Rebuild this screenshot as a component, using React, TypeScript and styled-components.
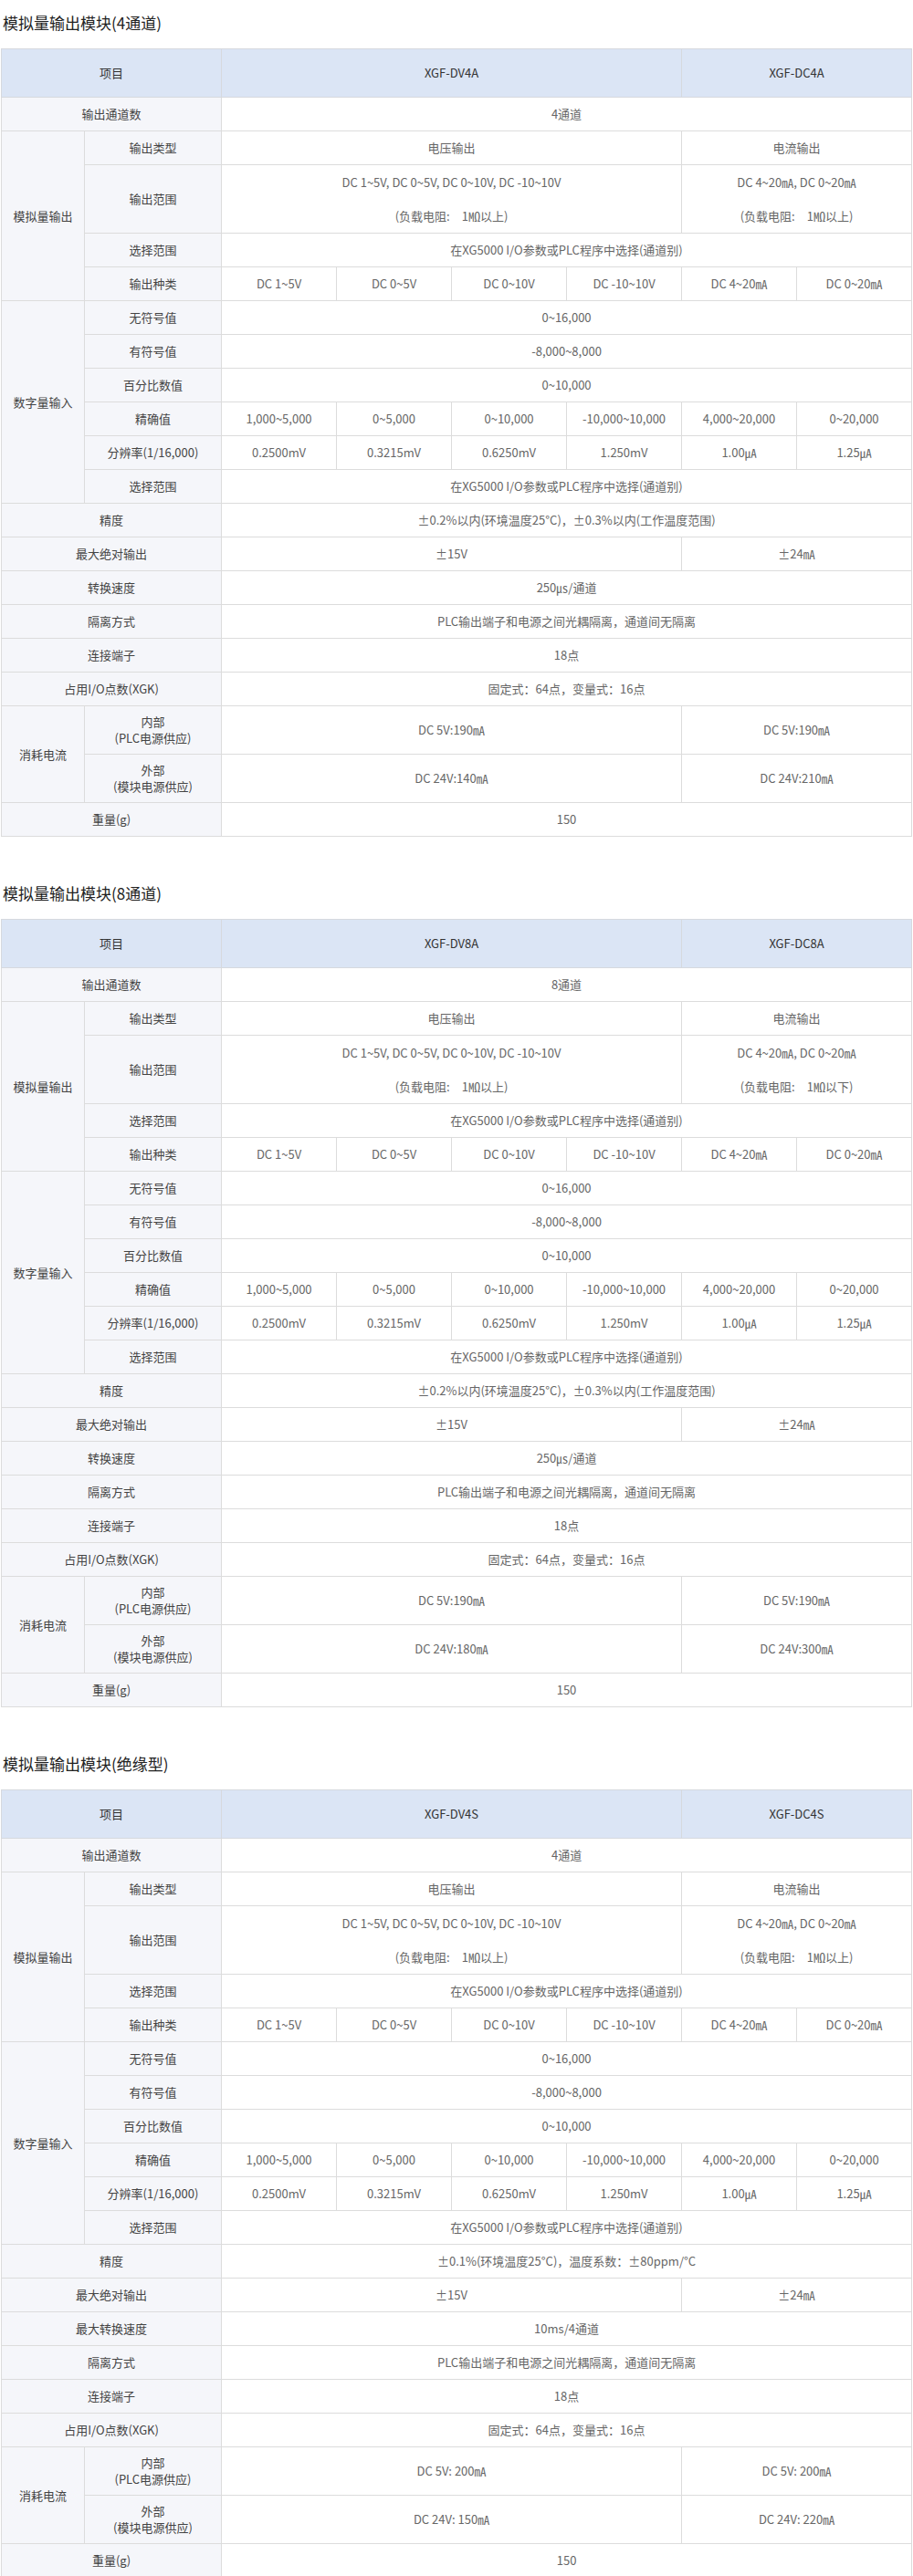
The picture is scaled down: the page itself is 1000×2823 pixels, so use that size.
import React from "react";
import styled, { createGlobalStyle } from "styled-components";

const Global = createGlobalStyle`
  body { margin: 0; background: #fff; font-family: "Noto Sans CJK SC", "Noto Sans", sans-serif; }
`;

const Page = styled.div`
  width: 998px;
`;
const Section = styled.section`
  margin-bottom: 37px;
`;
const Title = styled.h2`
  margin: 0;
  padding: 15px 0 19px 3px;
  font-size: 17px;
  line-height: 19px;
  font-weight: 400;
  color: #222;
`;
const Table = styled.table`
  width: 997px;
  margin-left: 1px;
  border-collapse: collapse;
  table-layout: fixed;
  font-size: 13px;
  line-height: 18px;
`;
const Th = styled.th`
  height: 52px;
  background: #dbe5f5;
  border: 1px solid #d6d9de;
  font-weight: 400;
  color: #333;
  padding: 0;
`;
const Label = styled.td<{ $tall?: boolean }>`
  height: ${(p) => (p.$tall ? "52px" : "36px")};
  background: #f5f6fa;
  border: 1px solid #dcdcdc;
  color: #444;
  text-align: center;
  padding: 0;
`;
const Cell = styled.td<{ $double?: boolean }>`
  height: 36px;
  border: 1px solid #dcdcdc;
  color: #666;
  text-align: center;
  padding: 0;
  line-height: ${(p) => (p.$double ? "37px" : "18px")};
`;

type Spec = {
  title: string;
  v: string;
  c: string;
  ch: string;
  load2: string;
  acc: string;
  speedLabel: string;
  speed: string;
  i5v: [string, string];
  i24: [string, string];
};

const specs: Spec[] = [
  {
    title: "模拟量输出模块(4通道)", v: "XGF-DV4A", c: "XGF-DC4A", ch: "4通道", load2: "以上",
    acc: "±0.2%以内(环境温度25°C)，±0.3%以内(工作温度范围)",
    speedLabel: "转换速度", speed: "250㎲/通道",
    i5v: ["DC 5V:190㎃", "DC 5V:190㎃"], i24: ["DC 24V:140㎃", "DC 24V:210㎃"],
  },
  {
    title: "模拟量输出模块(8通道)", v: "XGF-DV8A", c: "XGF-DC8A", ch: "8通道", load2: "以下",
    acc: "±0.2%以内(环境温度25°C)，±0.3%以内(工作温度范围)",
    speedLabel: "转换速度", speed: "250㎲/通道",
    i5v: ["DC 5V:190㎃", "DC 5V:190㎃"], i24: ["DC 24V:180㎃", "DC 24V:300㎃"],
  },
  {
    title: "模拟量输出模块(绝缘型)", v: "XGF-DV4S", c: "XGF-DC4S", ch: "4通道", load2: "以上",
    acc: "±0.1%(环境温度25°C)，温度系数：±80ppm/°C",
    speedLabel: "最大转换速度", speed: "10ms/4通道",
    i5v: ["DC 5V: 200㎃", "DC 5V: 200㎃"], i24: ["DC 24V: 150㎃", "DC 24V: 220㎃"],
  },
];

const SEL = "在XG5000 I/O参数或PLC程序中选择(通道别)";

function SpecTable({ s }: { s: Spec }) {
  const six = (vals: string[]) => vals.map((x, i) => <Cell key={i}>{x}</Cell>);
  return (
    <Section>
      <Title>{s.title}</Title>
      <Table>
        <colgroup>
          <col style={{ width: 91 }} />
          <col style={{ width: 150 }} />
          {Array.from({ length: 6 }).map((_, i) => <col key={i} style={{ width: 126 }} />)}
        </colgroup>
        <tbody>
          <tr><Th colSpan={2}>项目</Th><Th colSpan={4}>{s.v}</Th><Th colSpan={2}>{s.c}</Th></tr>
          <tr><Label colSpan={2}>输出通道数</Label><Cell colSpan={6}>{s.ch}</Cell></tr>
          <tr><Label rowSpan={4}>模拟量输出</Label><Label>输出类型</Label><Cell colSpan={4}>电压输出</Cell><Cell colSpan={2}>电流输出</Cell></tr>
          <tr>
            <Label style={{ height: 73 }}>输出范围</Label>
            <Cell colSpan={4} $double>DC 1~5V, DC 0~5V, DC 0~10V, DC -10~10V<br />(负载电阻:　1㏁以上)</Cell>
            <Cell colSpan={2} $double>DC 4~20㎃, DC 0~20㎃<br />(负载电阻:　1㏁{s.load2})</Cell>
          </tr>
          <tr><Label>选择范围</Label><Cell colSpan={6}>{SEL}</Cell></tr>
          <tr><Label>输出种类</Label>{six(["DC 1~5V", "DC 0~5V", "DC 0~10V", "DC -10~10V", "DC 4~20㎃", "DC 0~20㎃"])}</tr>
          <tr><Label rowSpan={6}>数字量输入</Label><Label>无符号值</Label><Cell colSpan={6}>0~16,000</Cell></tr>
          <tr><Label>有符号值</Label><Cell colSpan={6}>-8,000~8,000</Cell></tr>
          <tr><Label>百分比数值</Label><Cell colSpan={6}>0~10,000</Cell></tr>
          <tr><Label>精确值</Label>{six(["1,000~5,000", "0~5,000", "0~10,000", "-10,000~10,000", "4,000~20,000", "0~20,000"])}</tr>
          <tr><Label>分辨率(1/16,000)</Label>{six(["0.2500mV", "0.3215mV", "0.6250mV", "1.250mV", "1.00㎂", "1.25㎂"])}</tr>
          <tr><Label>选择范围</Label><Cell colSpan={6}>{SEL}</Cell></tr>
          <tr><Label colSpan={2}>精度</Label><Cell colSpan={6}>{s.acc}</Cell></tr>
          <tr><Label colSpan={2}>最大绝对输出</Label><Cell colSpan={4}>±15V</Cell><Cell colSpan={2}>±24㎃</Cell></tr>
          <tr><Label colSpan={2}>{s.speedLabel}</Label><Cell colSpan={6}>{s.speed}</Cell></tr>
          <tr><Label colSpan={2}>隔离方式</Label><Cell colSpan={6}>PLC输出端子和电源之间光耦隔离，通道间无隔离</Cell></tr>
          <tr><Label colSpan={2}>连接端子</Label><Cell colSpan={6}>18点</Cell></tr>
          <tr><Label colSpan={2}>占用I/O点数(XGK)</Label><Cell colSpan={6}>固定式：64点，变量式：16点</Cell></tr>
          <tr><Label rowSpan={2}>消耗电流</Label><Label $tall>内部<br />(PLC电源供应)</Label><Cell colSpan={4}>{s.i5v[0]}</Cell><Cell colSpan={2}>{s.i5v[1]}</Cell></tr>
          <tr><Label $tall>外部<br />(模块电源供应)</Label><Cell colSpan={4}>{s.i24[0]}</Cell><Cell colSpan={2}>{s.i24[1]}</Cell></tr>
          <tr><Label colSpan={2}>重量(g)</Label><Cell colSpan={6}>150</Cell></tr>
        </tbody>
      </Table>
    </Section>
  );
}

export default function App() {
  return (
    <Page>
      <Global />
      {specs.map((s) => <SpecTable key={s.title} s={s} />)}
    </Page>
  );
}
